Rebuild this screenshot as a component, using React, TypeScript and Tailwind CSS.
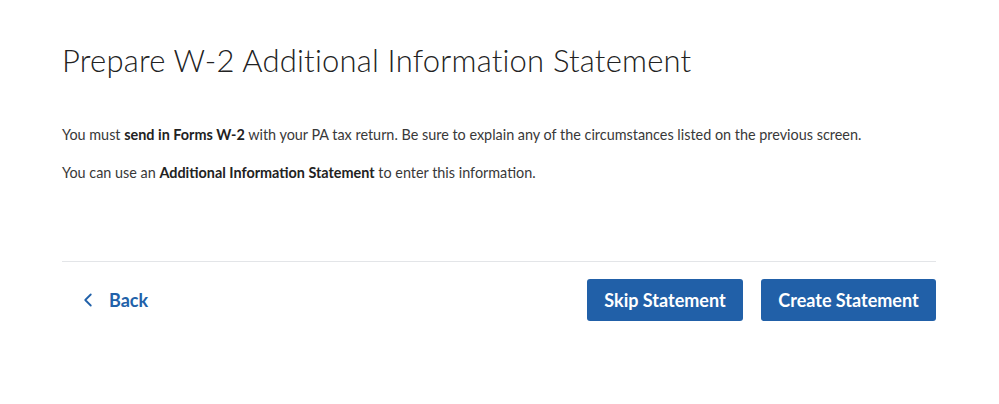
import { ChevronLeft } from 'lucide-react'

export default function App() {
  return (
    <div className="min-h-screen bg-white text-[#333] font-['Lato','Noto_Sans',sans-serif]">
      <div className="w-[874px] ml-[62px] pt-[40px]">
        <h1 className="text-[31px] font-light leading-[40px] text-[#222] tracking-[0.2px]">
          Prepare W-2 Additional Information Statement
        </h1>

        <p className="mt-[45px] text-[14.4px] leading-[20px] text-[#393939]">
          You must <span className="font-bold text-[#222]">send in Forms W-2</span> with your PA tax return. Be sure to explain any of the circumstances listed on the previous screen.
        </p>
        <p className="mt-[18px] text-[14.4px] leading-[20px] text-[#393939]">
          You can use an <span className="font-bold text-[#222]">Additional Information Statement</span> to enter this information.
        </p>

        <div className="mt-[78px] border-t border-[#e3e5e8]" />

        <div className="flex items-center justify-between pt-[17px]">
          <button className="flex items-center gap-[10px] pl-[15px] text-[18px] font-bold text-[#2161a9]">
            <ChevronLeft className="w-[22px] h-[22px]" strokeWidth={2} />
            <span>Back</span>
          </button>
          <div className="flex gap-[18px]">
            <button className="h-[42px] w-[156px] rounded-[3px] bg-[#2160a8] text-[18px] font-bold text-white">
              Skip Statement
            </button>
            <button className="h-[42px] w-[175px] rounded-[3px] bg-[#2160a8] text-[18px] font-bold text-white">
              Create Statement
            </button>
          </div>
        </div>
      </div>
    </div>
  )
}
